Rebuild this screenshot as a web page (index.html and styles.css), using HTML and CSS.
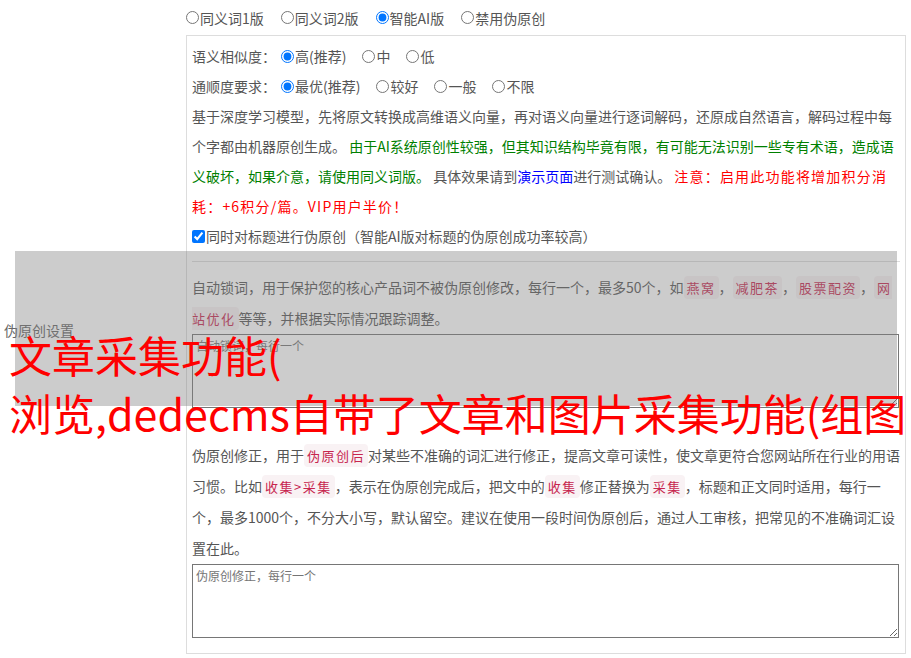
FILE: index.html
```html
<!DOCTYPE html>
<html lang="zh-CN">

<head>
    <meta charset="UTF-8">
    <title>伪原创设置</title>
    <link rel="stylesheet" href="styles.css">
</head>

<body>
    <div class="page">
        <div class="row">
            <div class="row-label">伪原创设置</div>
            <div class="row-field">
                <div class="modes">
                    <label class="opt"><input type="radio" name="mode">同义词1版</label>
                    <label class="opt"><input type="radio" name="mode">同义词2版</label>
                    <label class="opt"><input type="radio" name="mode" checked>智能AI版</label>
                    <label class="opt"><input type="radio" name="mode">禁用伪原创</label>
                </div>

                <div class="box">
                    <div class="line">
                        <span class="line-name">语义相似度：</span>
                        <label class="opt"><input type="radio" name="sim" checked>高(推荐)</label>
                        <label class="opt"><input type="radio" name="sim">中</label>
                        <label class="opt"><input type="radio" name="sim">低</label>
                    </div>
                    <div class="line">
                        <span class="line-name">通顺度要求：</span>
                        <label class="opt"><input type="radio" name="flu" checked>最优(推荐)</label>
                        <label class="opt"><input type="radio" name="flu">较好</label>
                        <label class="opt"><input type="radio" name="flu">一般</label>
                        <label class="opt"><input type="radio" name="flu">不限</label>
                    </div>
                    <p class="desc">基于深度学习模型，先将原文转换成高维语义向量，再对语义向量进行逐词解码，还原成自然语言，解码过程中每个字都由机器原创生成。 <span class="green">由于AI系统原创性较强，但其知识结构毕竟有限，有可能无法识别一些专有术语，造成语义破坏，如果介意，请使用同义词版。</span> 具体效果请到<a class="demo" href="#">演示页面</a>进行测试确认。 <span class="red">注意：启用此功能将增加积分消耗：+6积分/篇。VIP用户半价！</span></p>
                    <div class="line">
                        <label class="opt"><input type="checkbox" checked>同时对标题进行伪原创（智能AI版对标题的伪原创成功率较高）</label>
                    </div>

                    <hr class="sep">

                    <p class="desc desc-wide">自动锁词，用于保护您的核心产品词不被伪原创修改，每行一个，最多50个，如<code>燕窝</code>，<code>减肥茶</code>，<code>股票配资</code>，<code>网站优化</code>等等，并根据实际情况跟踪调整。</p>
                    <textarea class="words" placeholder="自动锁词，每行一个"></textarea>

                    <p class="desc desc-wide desc-gap">伪原创修正，用于<code>伪原创后</code>对某些不准确的词汇进行修正，提高文章可读性，使文章更符合您网站所在行业的用语习惯。比如<code>收集&gt;采集</code>，表示在伪原创完成后，把文中的<code>收集</code>修正替换为<code>采集</code>，标题和正文同时适用，每行一个，最多1000个，不分大小写，默认留空。建议在使用一段时间伪原创后，通过人工审核，把常见的不准确词汇设置在此。</p>
                    <textarea class="words" placeholder="伪原创修正，每行一个"></textarea>
                </div>
            </div>
        </div>

        <div class="mask"></div>
        <h1 class="title">文章采集功能(<br>浏览,dedecms自带了文章和图片采集功能(组图</h1>
    </div>
</body>

</html>
```

FILE: styles.css
```css
* {
    font-family: "Noto Sans CJK SC", "Microsoft YaHei", sans-serif;
}

body {
    background-color: #fff;
    margin: 0;
    color: #555;
    font-size: 14px;
}

.page {
    position: relative;
    width: 911px;
}

.row {
    display: flex;
    align-items: center;
}

.row-label {
    width: 182px;
    padding-left: 4px;
    color: #666;
}

.row-field {
    width: 720px;
    padding-bottom: 5px;
}

.modes {
    display: flex;
    align-items: center;
    gap: 17px;
    height: 35px;
}

.opt {
    display: flex;
    align-items: center;
}

.opt input {
    margin: 0 1px 0 0;
    width: 13px;
    height: 13px;
}

.box {
    border: 1px solid #ddd;
    padding: 5px 5px 15px 5px;
}

.line {
    display: flex;
    align-items: center;
    gap: 16px;
    height: 30px;
}

.line-name {
    margin-right: -11px;
}

.desc {
    margin: 0;
    line-height: 30px;
}

.desc-wide {
    line-height: 31px;
    margin-top: 10px;
}

.desc-gap {
    margin-top: 32px;
}

.green {
    color: #008000;
}

.red {
    color: #f00;
    letter-spacing: 1.2px;
}

.demo {
    color: #00f;
    text-decoration: none;
}

code {
    font-size: 13px;
    letter-spacing: 1.5px;
    padding: 2px 3px;
    color: #c7254e;
    background-color: #f9f2f4;
    border-radius: 4px;
}

.sep {
    margin: 10px 0 0 0;
    border: 0;
    border-top: 1px solid #ddd;
}

.words {
    display: block;
    box-sizing: border-box;
    width: 707px;
    height: 74px;
    margin: 0;
    padding: 2px 3px;
    font-size: 12px;
    border: 1px solid #767676;
}

.mask {
    position: absolute;
    left: 15px;
    top: 251px;
    width: 882px;
    height: 155px;
    background-color: rgba(128, 128, 128, 0.4);
}

.title {
    position: absolute;
    left: 9px;
    top: 325px;
    margin: 0;
    font-size: 43px;
    line-height: 58px;
    font-weight: normal;
    color: #f00;
    white-space: nowrap;
}
```
